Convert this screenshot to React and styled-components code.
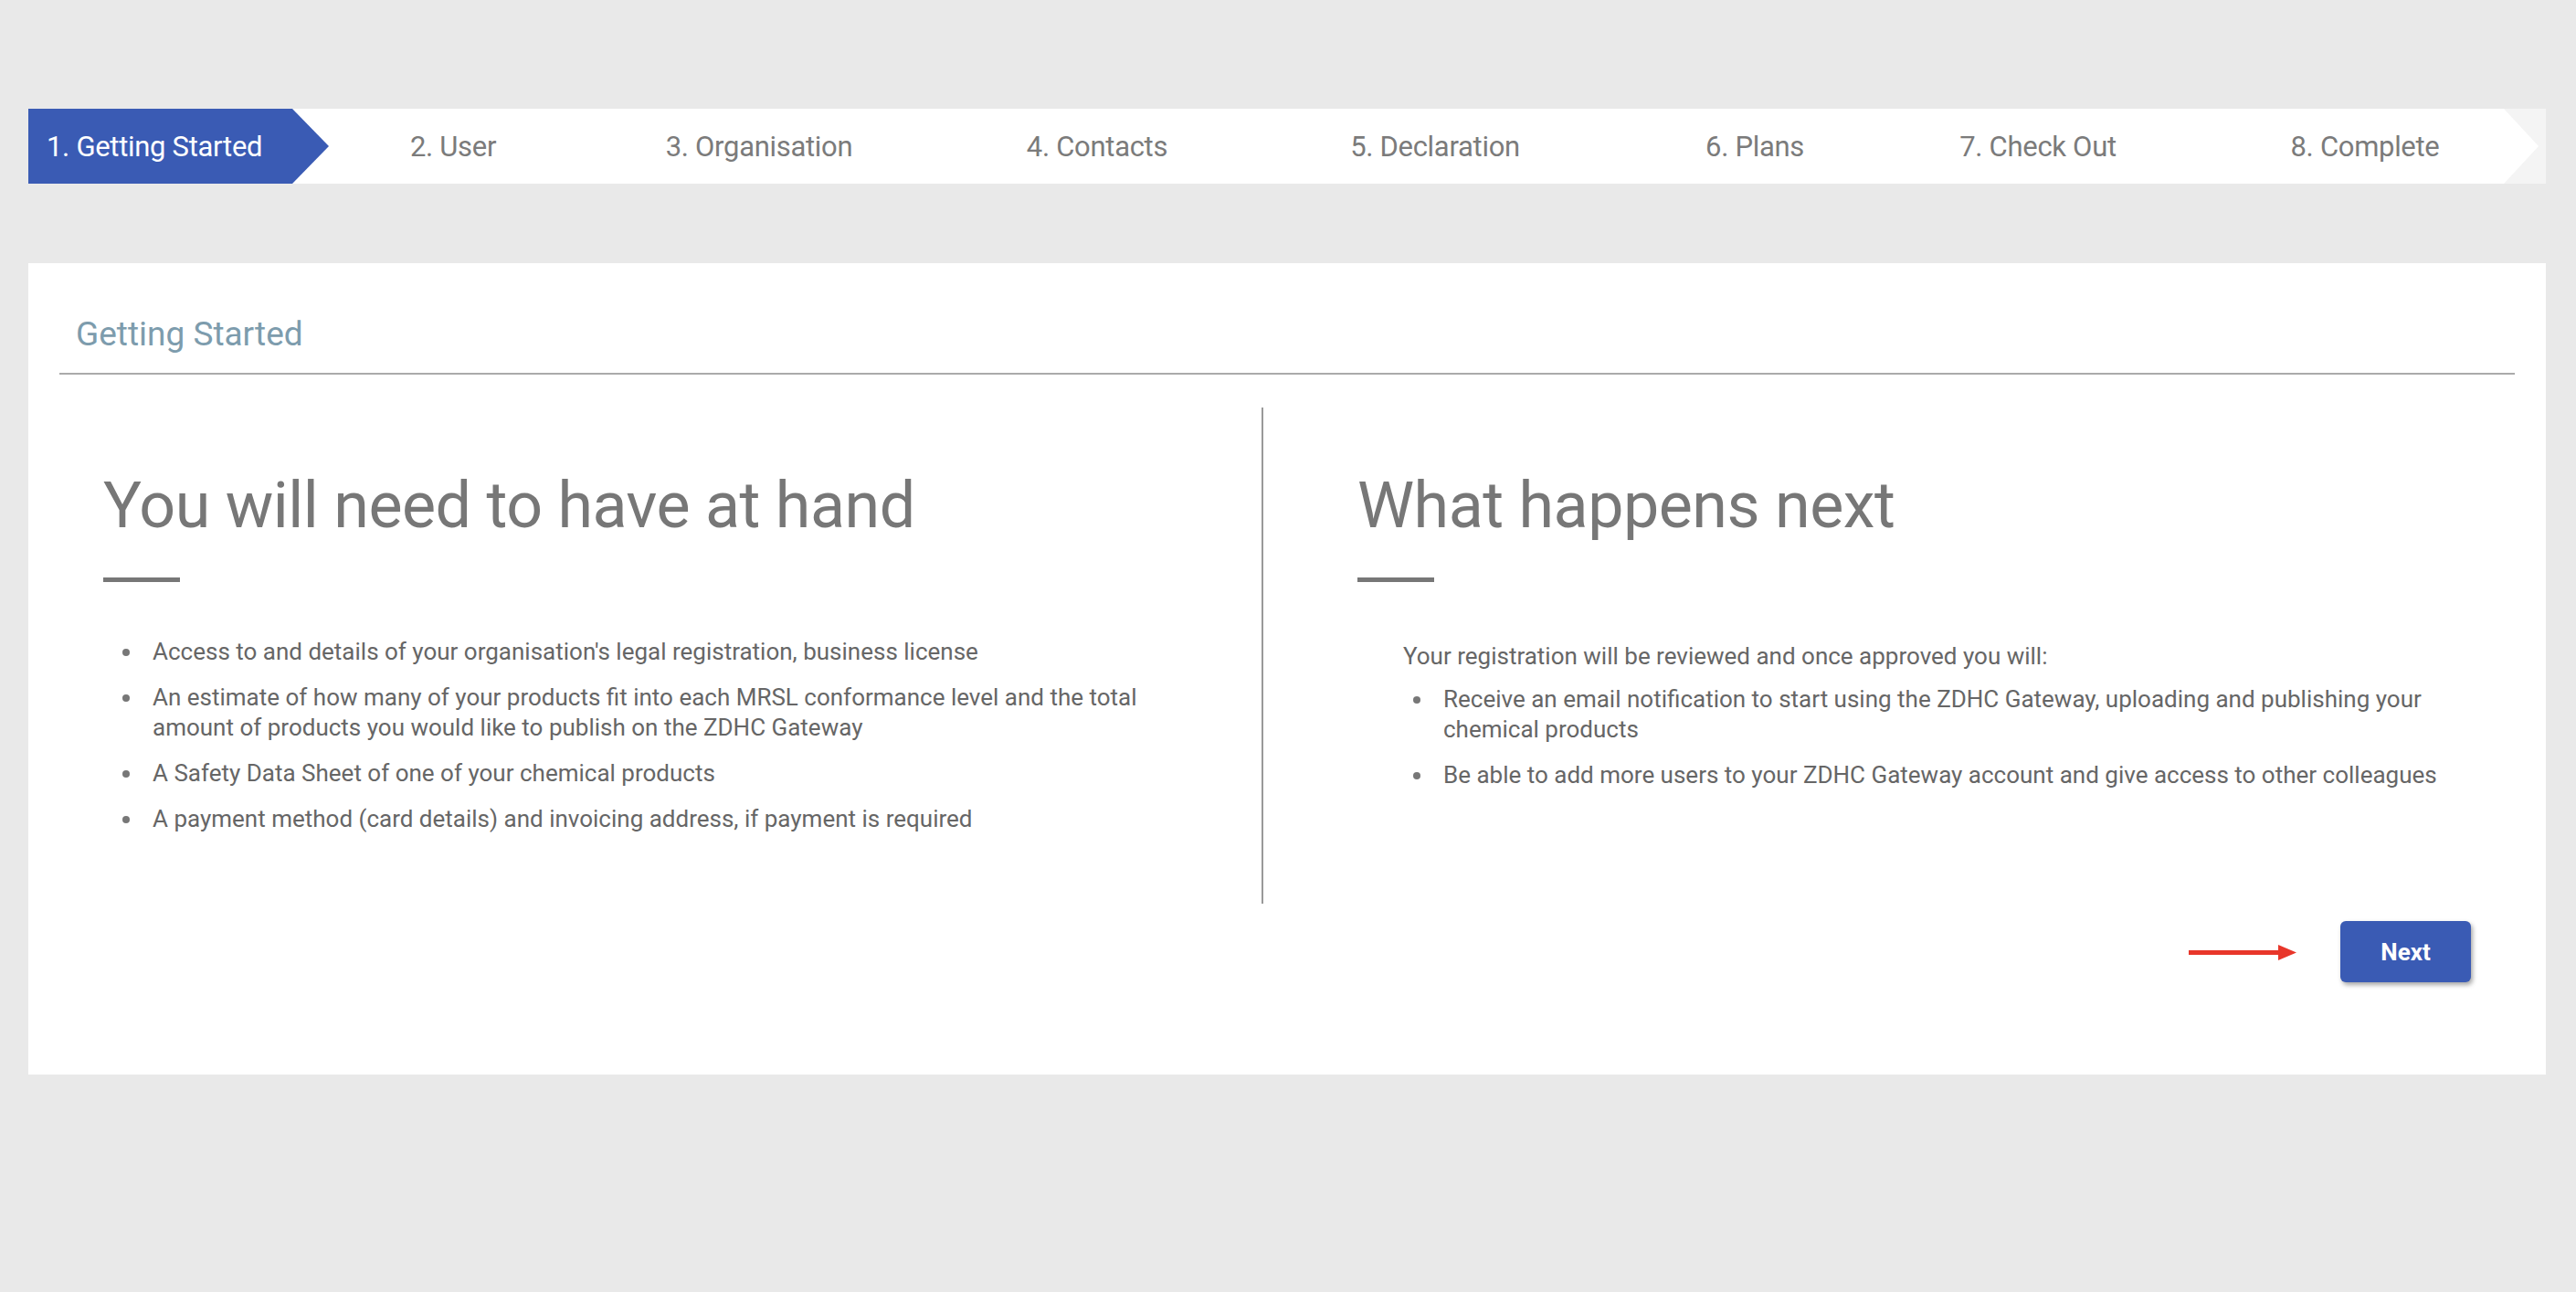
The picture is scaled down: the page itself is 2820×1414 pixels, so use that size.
import styled, { createGlobalStyle } from 'styled-components';

const Global = createGlobalStyle`
  body { margin: 0; background: #e9e9e9; font-family: Roboto, "Liberation Sans", sans-serif; }
`;

const Page = styled.div`
  padding: 119px 33px 0 31px;
  min-height: 1414px;
  box-sizing: border-box;
`;

const Stepper = styled.div`
  display: flex;
  height: 82px;
  background: #f4f4f4;
`;

const Track = styled.div`
  flex: 1;
  display: flex;
  background: #fff;
  clip-path: polygon(0 0, calc(100% - 46px) 0, calc(100% - 8px) 50%, calc(100% - 46px) 100%, 0 100%);
  margin-right: 0;
`;

const Step = styled.div`
  display: flex;
  align-items: center;
  justify-content: center;
  font-size: 31px;
  color: ${p => (p.$active ? '#fff' : '#7b7b7b')};
  background: ${p => (p.$active ? '#3a5bb4' : 'transparent')};
  width: ${p => p.$w}px;
  flex-shrink: 0;
  letter-spacing: -0.3px;
  ${p => p.$active && 'clip-path: polygon(0 0, 289px 0, 329px 50%, 289px 100%, 0 100%); justify-content: flex-start; padding-left: 20px; box-sizing: border-box;'}
`;

const Card = styled.div`
  margin-top: 87px;
  background: #fff;
  height: 888px;
  padding: 0 34px;
  box-sizing: border-box;
`;

const Title = styled.div`
  font-size: 37px;
  color: #7d9cad;
  padding: 56px 0 0 18px;
  height: 122px;
  box-sizing: border-box;
  border-bottom: 2px solid #aaa;
`;

const Columns = styled.div`
  display: grid;
  grid-template-columns: 1316px 2px 1fr;
  margin-top: 36px;
  height: 543px;
`;

const Divider = styled.div`
  background: #999;
`;

const Col = styled.div`
  padding-left: ${p => p.$pad}px;
`;

const Heading = styled.h2`
  margin: 66px 0 0;
  font-weight: 400;
  font-size: 70px;
  color: #777;
  letter-spacing: -0.5px;
`;

const Bar = styled.div`
  width: 84px;
  height: 5px;
  background: #777;
  margin-top: 38px;
`;

const Intro = styled.p`
  margin: 66px 0 0 50px;
  font-size: 26px;
  color: #666;
`;

const List = styled.ul`
  margin: ${p => p.$top}px 0 0;
  padding-left: ${p => p.$indent}px;
  font-size: 26px;
  line-height: 33px;
  color: #666;
  max-width: 1150px;
  li { margin-bottom: 17px; padding-left: 10px; }
  li::marker { color: #777; }
`;

const Footer = styled.div`
  display: flex;
  justify-content: flex-end;
  align-items: center;
  gap: 20px;
  padding-right: 48px;
  margin-top: 19px;
`;

const NextButton = styled.button`
  width: 143px;
  height: 67px;
  border: none;
  border-radius: 6px;
  background: #3a5bb4;
  color: #fff;
  font-family: Roboto, sans-serif;
  font-weight: 700;
  font-size: 26px;
  box-shadow: 2px 3px 5px rgba(0,0,0,0.35);
`;

const steps = [
  ['1. Getting Started', 330], ['2. User', 270], ['3. Organisation', 400], ['4. Contacts', 340],
  ['5. Declaration', 400], ['6. Plans', 300], ['7. Check Out', 320], ['8. Complete', 350],
];

export default function App() {
  return (
    <Page>
      <Global />
      <Stepper>
        <Track>
          {steps.map(([s, w], i) => (
            <Step key={s} $active={i === 0} $w={w} style={i === 7 ? { flex: 1 } : undefined}>{s}</Step>
          ))}
        </Track>
      </Stepper>
      <Card>
        <Title>Getting Started</Title>
        <Columns>
          <Col $pad={48}>
            <Heading>You will need to have at hand</Heading>
            <Bar />
            <List $top={60} $indent={44}>
              <li>Access to and details of your organisation's legal registration, business license</li>
              <li>An estimate of how many of your products fit into each MRSL conformance level and the total amount of products you would like to publish on the ZDHC Gateway</li>
              <li>A Safety Data Sheet of one of your chemical products</li>
              <li>A payment method (card details) and invoicing address, if payment is required</li>
            </List>
          </Col>
          <Divider />
          <Col $pad={103}>
            <Heading>What happens next</Heading>
            <Bar />
            <Intro>Your registration will be reviewed and once approved you will:</Intro>
            <List $top={16} $indent={84}>
              <li>Receive an email notification to start using the ZDHC Gateway, uploading and publishing your chemical products</li>
              <li>Be able to add more users to your ZDHC Gateway account and give access to other colleagues</li>
            </List>
          </Col>
        </Columns>
        <Footer>
          <svg width="118" height="20" viewBox="0 0 118 20">
            <rect x="0" y="8" width="100" height="5" fill="#e8362a" />
            <polygon points="98,2 118,10.5 98,19" fill="#e8362a" />
          </svg>
          <span style={{ width: 8 }} />
          <NextButton>Next</NextButton>
        </Footer>
      </Card>
    </Page>
  );
}
